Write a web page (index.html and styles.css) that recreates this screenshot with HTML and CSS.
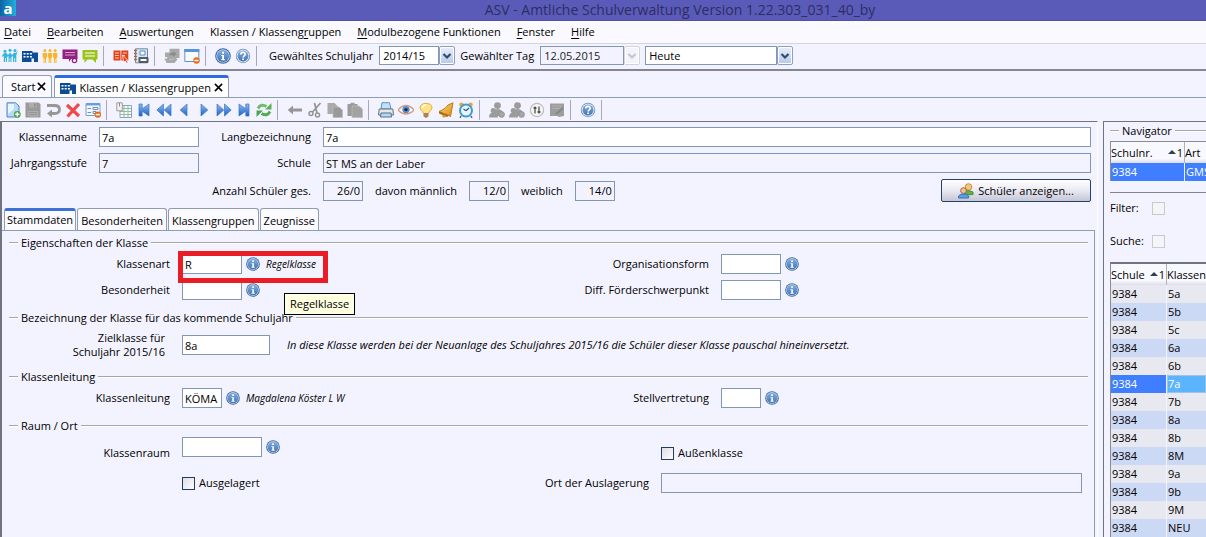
FILE: index.html
```
<!DOCTYPE html>
<html lang="de">
<head>
<meta charset="utf-8">
<title>ASV - Amtliche Schulverwaltung</title>
<link rel="stylesheet" href="styles.css">
</head>
<body>
<svg class="defs" aria-hidden="true">
  <defs>
    <linearGradient id="blue" x1="0" y1="0" x2="0" y2="1"><stop offset="0" stop-color="#8cbcf0"/><stop offset="1" stop-color="#1f5fc0"/></linearGradient>
    <linearGradient id="ball" x1="0" y1="0" x2="0" y2="1"><stop offset="0" stop-color="#86aede"/><stop offset="1" stop-color="#3f74b4"/></linearGradient>
    <linearGradient id="gold" x1="0" y1="0" x2="1" y2="1"><stop offset="0" stop-color="#ffe070"/><stop offset="1" stop-color="#d98a1a"/></linearGradient>
    <symbol id="i-info" viewBox="0 0 16 16"><circle cx="8" cy="8" r="7.8" fill="#3c66a0"/><circle cx="8" cy="8" r="6.800" fill="#b9d0ec"/><circle cx="8" cy="8" r="6" fill="url(#ball)"/><path d="M6.300 7h2.700v4.200h1v1.100H6.200v-1.100h1V8.100h-.9zM7.100 3.800h1.900v1.900H7.100z" fill="#fff"/></symbol>
    <symbol id="i-help" viewBox="0 0 16 16"><circle cx="8" cy="8" r="7.2" fill="#6d8db8"/><circle cx="8" cy="8" r="6.4" fill="#d8e4f4"/><circle cx="8" cy="8" r="5.4" fill="url(#ball)"/><path d="M5.8 6.600C5.8 3.600 10.300 3.800 10.200 6.400 10.100 7.800 8.100 7.800 8.100 9.600" fill="none" stroke="#fff" stroke-width="1.600"/><path d="M7.200 10.400h1.800v1.700H7.200z" fill="#fff"/></symbol>
    <symbol id="i-people" viewBox="0 0 16 16"><g fill="#35b4dc"><circle cx="3" cy="3.200" r="1.500"/><circle cx="8" cy="2.200" r="1.500"/><circle cx="13" cy="2.600" r="1.500"/><path d="M.3 7l2-2h2L6 7 8 4.500 10 7l2-2.200h2L15.800 3l-1.500 4v7h-1.200v-4h-.8v4H11V8L9.500 9v5H8.400v-4h-.8v4H6.500V8L5 9v5H3.900v-4h-.8v4H1.800V8L.3 9z"/></g></symbol>
    <symbol id="i-school" viewBox="0 0 16 16"><path d="M0 3h10.500v1.500H16V14h-4v-3.500H9.500V14H0z" fill="#0b4c94"/><path d="M1.500 5h2v1.600h-2zM4.700 5h2v1.600h-2zM7.900 5h2v1.600h-2zM1.500 8h2v1.600h-2zM4.700 8h2v1.600h-2zM7.900 8h2v1.600h-2z" fill="#fff"/></symbol>
    <symbol id="i-three" viewBox="0 0 16 16"><g fill="#f9b628"><circle cx="2.800" cy="2.600" r="1.500"/><circle cx="8" cy="2.600" r="1.500"/><circle cx="13.200" cy="2.600" r="1.500"/><path d="M.6 5h4.400v4.500h-.9V15H3.100v-4h-.6v4H1.500V9.500H.6zM5.800 5h4.400v4.500h-.9V15H8.300v-4h-.6v4H6.700V9.500h-.9zM11 5h4.400v4.500h-.9V15h-1v-4h-.6v4h-1V9.500H11z"/></g></symbol>
    <symbol id="i-board" viewBox="0 0 16 16"><path d="M.5 1.500h15V11H9l-2 3v-3H.5z" fill="#94207f"/><path d="M3 4.500h10M3 7h10" stroke="#d9a3d0"/><circle cx="12.500" cy="12.500" r="2.800" fill="#94207f"/><circle cx="12.500" cy="12.500" r="1.500" fill="#f3f3ff"/></symbol>
    <symbol id="i-chat" viewBox="0 0 16 16"><path d="M.5 2h15v9.500H14V15l-3.500-3.500H5.500L2.500 15v-3.500h-2z" fill="#9cc21c"/><path d="M3 5h10M3 8h10" stroke="#fff" stroke-width="1.200"/></symbol>
    <symbol id="i-book" viewBox="0 0 16 16"><path d="M.5 2.500h7v10h-7zM8.300 2.500h7v10h-7z" fill="#e2421c"/><path d="M2 5h4M2 7.500h4M2 10h4M9.800 5h4M9.800 7.500H12" stroke="#ffc8ac"/><path d="M9.500 7l5 5-1 .2 1.700 2.300-1.500.8-1.300-2.200-1.800 1z" fill="#e2421c" stroke="#fff" stroke-width=".7"/></symbol>
    <symbol id="i-save-doc" viewBox="0 0 16 16"><path d="M2.500.8h12v14h-12z" fill="#d9e5f5" stroke="#7b8796"/><path d="M1 2.500h3M1 5.500h3M1 8.500h3M1 11.500h3" stroke="#a56b42" stroke-width="1.300"/><path d="M7 3h5v4H7z" fill="#fff" stroke="#4b8fe0"/><rect x="5.500" y="9" width="10" height="6" rx="1" fill="#555b66"/><path d="M7.500 12h6" stroke="#fff" stroke-width="2"/></symbol>
    <symbol id="i-puzzle" viewBox="0 0 16 16"><path d="M5.500.8h10V10H12l1.500 1.500-3 3.500H2.500L.5 10.500H3.200V9H1V4.500h4.500z" fill="#a9a9a9"/><path d="M5 7.200q1-3 4-2.700V3l3.500 3L9 9V7.200z" fill="#8b8b8b"/><path d="M5 11.200q3 1.500 5-.7" stroke="#c4c4c4" fill="none"/></symbol>
    <symbol id="i-window" viewBox="0 0 16 16"><path d="M.8 1.500h14v12H.8z" fill="#f8fbff" stroke="#6495cf"/><path d="M.3 1h15v3H.3z" fill="#5a93da"/><circle cx="12.500" cy="12.500" r="3.200" fill="#e66d1b"/><path d="M10.500 12.500h4" stroke="#fff" stroke-width="1.500"/></symbol>
    <symbol id="i-new" viewBox="0 0 16 16"><path d="M2 .8h8.500L14 4v11H2z" fill="#b9daf7" stroke="#4c86c9"/><path d="M3 2h6v5l-6 5z" fill="#eaf5ff"/><circle cx="12.300" cy="12.300" r="3.400" fill="#4da44c"/><path d="M10.200 12.300h4.200M12.300 10.200v4.200" stroke="#fff" stroke-width="1.400"/></symbol>
    <symbol id="i-disk" viewBox="0 0 16 16"><path d="M.5.500h13L15.500 2v13.500H.5z" fill="#9a9a9a"/><path d="M4 1h7.500v4.500H4zM3 9h10v5.500H3z" fill="#aeaeae"/><path d="M9 1.500h1.500v3H9z" fill="#8b8b8b"/><path d="M4 10.500h8M4 12.500h8" stroke="#959595"/></symbol>
    <symbol id="i-undo" viewBox="0 0 16 16"><path d="M2 3.500H9.500q5 0 5 4t-5 4H6" fill="none" stroke="#979797" stroke-width="2.800"/><path d="M7 7.500V15.500l-5-4z" fill="#979797"/></symbol>
    <symbol id="i-x" viewBox="0 0 16 16"><path d="M2 3l12 11M14 2L2.500 14.500" stroke="#f04a48" stroke-width="3.200"/></symbol>
    <symbol id="i-form" viewBox="0 0 16 16"><path d="M1 1.500h14v12H1z" fill="#f5f9ff" stroke="#7ba0cb"/><path d="M1 1h14v2.500H1z" fill="#6a9edc"/><path d="M2.500 6.500H6M2.500 10.500H6M8 5.500h5v2H8zM8 9.500h3v2H8z" stroke="#6a8fbb" fill="none"/><circle cx="12.800" cy="12.600" r="3.200" fill="#e66d1b"/><path d="M10.800 12.600h4" stroke="#fff" stroke-width="1.500"/></symbol>
    <symbol id="i-list" viewBox="0 0 16 16"><path d="M4 3.500h11.500v12H4z" fill="#f8fbf8" stroke="#88a5bd"/><path d="M4 6.500h11M4 9.500h11M4 12.500h11M8 4v11M12 4v11" stroke="#92bba4"/><path d="M.8.800h5.500v8H.8z" fill="#f2f2f0" stroke="#9c9c98"/><path d="M3.500 1v3.500" stroke="#888"/></symbol>
    <symbol id="i-first" viewBox="0 0 16 16"><path d="M3 2h3.200v4.800L13 2v12L6.200 9.200V14H3z" fill="url(#blue)" stroke="#3b74c8" stroke-width=".7"/></symbol>
    <symbol id="i-rew" viewBox="0 0 16 16"><path d="M7.500 2v12L.8 8zM15 2v12L8.200 8z" fill="url(#blue)" stroke="#3b74c8" stroke-width=".7"/></symbol>
    <symbol id="i-prev" viewBox="0 0 16 16"><path d="M11 2v12L4.200 8z" fill="url(#blue)" stroke="#3b74c8" stroke-width=".7"/></symbol>
    <symbol id="i-refresh" viewBox="0 0 16 16"><path d="M2 6.500Q5 1 10.500 4.500" fill="none" stroke="#6fbb6a" stroke-width="3"/><path d="M9 7.500h6.500V1z" fill="#5cb058"/><path d="M14 9.500Q11 15 5.500 11.500" fill="none" stroke="#56aa56" stroke-width="3"/><path d="M7 8.500H.5V15z" fill="#4fa652"/></symbol>
    <symbol id="i-back" viewBox="0 0 16 16"><path d="M6 3.500v3h9v3H6v3L.8 8z" fill="#969696"/></symbol>
    <symbol id="i-cut" viewBox="0 0 16 16"><path d="M13.500 1L5.500 10M7.500 1l2.500 10" stroke="#939393" stroke-width="1.700"/><circle cx="4" cy="11.500" r="2" fill="none" stroke="#939393" stroke-width="1.500"/><circle cx="10.500" cy="13" r="2" fill="none" stroke="#939393" stroke-width="1.500"/></symbol>
    <symbol id="i-copy" viewBox="0 0 16 16"><path d="M.5 1h7l3 3v8H.5z" fill="#aaa"/><path d="M6 5h6l3.500 3v7.500H6z" fill="#999" stroke="#bdbdbd" stroke-width=".7"/></symbol>
    <symbol id="i-paste" viewBox="0 0 16 16"><path d="M.5 2h3V.800h4V2h3v12H.5z" fill="#9b9b9b"/><path d="M5 4h7l3.500 3v8.500H5z" fill="#a2a2a2" stroke="#bcbcbc" stroke-width=".7"/></symbol>
    <symbol id="i-print" viewBox="0 0 16 16"><path d="M4 .7h7.500L13 7H3z" fill="#c4e1fa" stroke="#5892cf"/><path d="M1.200 7h13.600l.7 6H.5z" fill="#e5e7eb" stroke="#666d78"/><path d="M3 11h10l.5 4h-11z" fill="#b9d8f4" stroke="#4f6f91"/></symbol>
    <symbol id="i-eye" viewBox="0 0 16 16"><path d="M0 8q8-9 16 0-8 8-16 0z" fill="#fff" stroke="#d79b78" stroke-width="1.300"/><circle cx="8" cy="7.600" r="3.700" fill="#5590d0"/><circle cx="8" cy="7.600" r="1.700" fill="#1b2b48"/></symbol>
    <symbol id="i-bulb" viewBox="0 0 16 16"><path d="M5.500 11.500C5 9 2 8.500 2 5.500 2 0 14 0 14 5.500c0 3-3 3.500-3.500 6z" fill="#ffe388" stroke="#e6ab3b"/><path d="M4.500 6q0-3 3.500-3" stroke="#fff" stroke-width="1.600" fill="none"/><path d="M5.500 11h5v3.500L8 16l-2.500-1.500z" fill="#a78556"/></symbol>
    <symbol id="i-bell" viewBox="0 0 16 16"><path d="M15 .8L12.500 14.500 10 13 1 9.500C5 8 8 6 10 3z" fill="url(#gold)" stroke="#bb7a1b"/><path d="M1 9.500l10 4-2 1.500-8-3.500z" fill="#a86813"/><circle cx="6" cy="14" r="1.600" fill="#d99328"/></symbol>
    <symbol id="i-clock" viewBox="0 0 16 16"><circle cx="3.500" cy="2.800" r="2.300" fill="#e5a83f"/><circle cx="12.500" cy="2.800" r="2.300" fill="#e5a83f"/><path d="M3 14l-1 1.800M13 14l1 1.800" stroke="#557" stroke-width="1.500"/><circle cx="8" cy="8.600" r="6" fill="#eaf6ff" stroke="#3d9bd4" stroke-width="2"/><path d="M8 8.800l3-2.800M8 8.800L5.500 7" stroke="#365b7b" stroke-width="1.300"/></symbol>
    <symbol id="i-users" viewBox="0 0 16 16"><g fill="#9c9c9c"><circle cx="8.500" cy="3.600" r="3.400"/><path d="M4 14q-1-7 4.500-7t6.500 7z"/><circle cx="4.300" cy="8.500" r="2.600"/><path d="M0 15.500q0-5 4.500-5t4.500 5z"/></g><circle cx="12.600" cy="12.500" r="2.900" fill="#a6a6a6" stroke="#8c8c8c" stroke-width=".7"/></symbol>
    <symbol id="i-tools" viewBox="0 0 16 16"><circle cx="8" cy="8" r="6.600" fill="#f6f6f6" stroke="#bbb" stroke-width="1.200"/><path d="M6 4.500v7M10 4.500v7" stroke="#444" stroke-width="1.200"/><path d="M4.500 6h3M8.500 10h3" stroke="#444" stroke-width="1.600"/></symbol>
    <symbol id="i-note" viewBox="0 0 16 16"><path d="M1 1.500h14V14l-5 1-1.500-1H1z" fill="#9d9d9d"/><path d="M3 4h10M3 6.500h10" stroke="#b1b1b1"/><path d="M7 12l7-6" stroke="#858585" stroke-width="2"/></symbol>
    <symbol id="i-pupils" viewBox="0 0 16 16"><circle cx="10.500" cy="4" r="3.300" fill="#f1c878" stroke="#c4933e"/><path d="M6 12V9q4-3 9 0v2.500z" fill="#64b346" stroke="#478d32"/><circle cx="5.500" cy="7.600" r="2.900" fill="#efc198" stroke="#a3653a"/><path d="M.6 15v-2q1-2 5-2t5 2v2z" fill="#5a9ee6" stroke="#3370bd"/></symbol>
    <symbol id="i-chev" viewBox="0 0 10 10"><path d="M1.500 3L5 6.500 8.500 3" fill="none" stroke="currentColor" stroke-width="2.200"/></symbol>
    <symbol id="i-close" viewBox="0 0 10 10"><path d="M1 1l8 8M9 1L1 9" fill="none" stroke="#000" stroke-width="1.700"/></symbol>
  </defs>
</svg>

<div class="app">
  <header class="titlebar">
    <span class="logo">a</span>
    <span class="title">ASV - Amtliche Schulverwaltung Version 1.22.303_031_40_by</span>
  </header>

  <nav class="menu">
    <button><u>D</u>atei</button>
    <button><u>B</u>earbeiten</button>
    <button><u>A</u>uswertungen</button>
    <button>Klassen / Klasseng<u>r</u>uppen</button>
    <button><u>M</u>odulbezogene Funktionen</button>
    <button><u>F</u>enster</button>
    <button><u>H</u>ilfe</button>
  </nav>

  <div class="toolbar main-tools">
    <button class="tool" aria-label="Schüler"><svg><use href="#i-people"/></svg></button>
    <button class="tool" aria-label="Klassen"><svg><use href="#i-school"/></svg></button>
    <button class="tool" aria-label="Lehrkräfte"><svg><use href="#i-three"/></svg></button>
    <button class="tool" aria-label="Unterricht"><svg><use href="#i-board"/></svg></button>
    <button class="tool" aria-label="Nachrichten"><svg><use href="#i-chat"/></svg></button>
    <i class="sep"></i>
    <button class="tool" aria-label="Berichte"><svg><use href="#i-book"/></svg></button>
    <button class="tool" aria-label="Berichtsbibliothek"><svg><use href="#i-save-doc"/></svg></button>
    <i class="sep"></i>
    <button class="tool" aria-label="Module" disabled><svg><use href="#i-puzzle"/></svg></button>
    <button class="tool" aria-label="Fenster schließen"><svg><use href="#i-window"/></svg></button>
    <i class="sep"></i>
    <button class="tool" aria-label="Info"><svg><use href="#i-info"/></svg></button>
    <button class="tool" aria-label="Hilfe"><svg><use href="#i-help"/></svg></button>
    <i class="sep"></i>
    <label class="tool-label" for="jahr">Gewähltes Schuljahr</label>
    <span class="combo combo-year"><select id="jahr"><option>2014/15</option></select><span class="drop"><svg><use href="#i-chev"/></svg></span></span>
    <label class="tool-label" for="tag">Gewählter Tag</label>
    <span class="combo combo-day"><select id="tag" disabled><option>12.05.2015</option></select><span class="drop off"><svg><use href="#i-chev"/></svg></span></span>
    <span class="combo combo-today"><select aria-label="Zeitpunkt"><option>Heute</option></select><span class="drop"><svg><use href="#i-chev"/></svg></span></span>
  </div>

  <div class="doc-tabs" role="tablist">
    <button class="doc-tab" role="tab">Start<svg class="x"><use href="#i-close"/></svg></button>
    <button class="doc-tab active" role="tab" aria-selected="true"><svg class="tab-icon"><use href="#i-school"/></svg>Klassen / Klassengruppen<svg class="x"><use href="#i-close"/></svg></button>
  </div>

  <div class="toolbar doc-tools">
    <button class="tool" aria-label="Neu"><svg><use href="#i-new"/></svg></button>
    <button class="tool" aria-label="Speichern" disabled><svg><use href="#i-disk"/></svg></button>
    <button class="tool" aria-label="Rückgängig" disabled><svg><use href="#i-undo"/></svg></button>
    <button class="tool" aria-label="Löschen"><svg><use href="#i-x"/></svg></button>
    <button class="tool" aria-label="Formular schließen"><svg><use href="#i-form"/></svg></button>
    <i class="sep"></i>
    <button class="tool" aria-label="Liste"><svg><use href="#i-list"/></svg></button>
    <button class="tool" aria-label="Erster"><svg><use href="#i-first"/></svg></button>
    <button class="tool" aria-label="Zurückspulen"><svg><use href="#i-rew"/></svg></button>
    <button class="tool" aria-label="Voriger"><svg><use href="#i-prev"/></svg></button>
    <button class="tool" aria-label="Nächster"><svg class="flip"><use href="#i-prev"/></svg></button>
    <button class="tool" aria-label="Vorspulen"><svg class="flip"><use href="#i-rew"/></svg></button>
    <button class="tool" aria-label="Letzter"><svg class="flip"><use href="#i-first"/></svg></button>
    <button class="tool" aria-label="Aktualisieren"><svg><use href="#i-refresh"/></svg></button>
    <i class="sep"></i>
    <button class="tool" aria-label="Zurück" disabled><svg><use href="#i-back"/></svg></button>
    <button class="tool" aria-label="Ausschneiden" disabled><svg><use href="#i-cut"/></svg></button>
    <button class="tool" aria-label="Kopieren" disabled><svg><use href="#i-copy"/></svg></button>
    <button class="tool" aria-label="Einfügen" disabled><svg><use href="#i-paste"/></svg></button>
    <i class="sep"></i>
    <button class="tool" aria-label="Drucken"><svg><use href="#i-print"/></svg></button>
    <button class="tool" aria-label="Vorschau"><svg><use href="#i-eye"/></svg></button>
    <button class="tool" aria-label="Hinweis"><svg><use href="#i-bulb"/></svg></button>
    <button class="tool" aria-label="Erinnerung"><svg><use href="#i-bell"/></svg></button>
    <button class="tool" aria-label="Wiedervorlage"><svg><use href="#i-clock"/></svg></button>
    <i class="sep"></i>
    <button class="tool" aria-label="Schüler zuordnen" disabled><svg><use href="#i-users"/></svg></button>
    <button class="tool" aria-label="Schüler entfernen" disabled><svg><use href="#i-users"/></svg></button>
    <button class="tool" aria-label="Einstellungen"><svg><use href="#i-tools"/></svg></button>
    <button class="tool" aria-label="Notiz" disabled><svg><use href="#i-note"/></svg></button>
    <i class="sep"></i>
    <button class="tool" aria-label="Hilfe zum Modul"><svg><use href="#i-help"/></svg></button>
    <i class="sep"></i>
  </div>

  <div class="work">
    <main class="editor">
      <div class="head">
        <label for="kname">Klassenname</label><input id="kname" value="7a">
        <label for="lang">Langbezeichnung</label><input id="lang" value="7a">
        <label for="stufe">Jahrgangsstufe</label><input id="stufe" value="7" readonly>
        <label for="schule">Schule</label><input id="schule" value="ST MS an der Laber" readonly>
      </div>
      <div class="counts">
        <label class="counts-first" for="ges">Anzahl Schüler ges.</label><input id="ges" value="26/0" readonly>
        <label for="mann">davon männlich</label><input id="mann" value="12/0" readonly>
        <label for="weib">weiblich</label><input id="weib" value="14/0" readonly>
        <button class="show"><svg><use href="#i-pupils"/></svg>Schüler anzeigen...</button>
      </div>

      <div class="tabs" role="tablist">
        <button class="tab active" role="tab" aria-selected="true">Stammdaten</button>
        <button class="tab" role="tab">Besonderheiten</button>
        <button class="tab" role="tab">Klassengruppen</button>
        <button class="tab" role="tab">Zeugnisse</button>
      </div>

      <div class="panel">
        <section>
          <h2>Eigenschaften der Klasse</h2>
          <div class="grid">
            <label for="art">Klassenart</label>
            <div class="field marked"><input class="w60" id="art" value="R"><svg class="info"><use href="#i-info"/></svg><em>Regelklasse</em><span class="tip" role="tooltip">Regelklasse</span></div>
            <label for="org">Organisationsform</label>
            <div class="field"><input class="w60" id="org"><svg class="info"><use href="#i-info"/></svg></div>
            <label for="bes">Besonderheit</label>
            <div class="field"><input class="w60" id="bes"><svg class="info"><use href="#i-info"/></svg></div>
            <label for="diff">Diff. Förderschwerpunkt</label>
            <div class="field"><input class="w60" id="diff"><svg class="info"><use href="#i-info"/></svg></div>
          </div>
        </section>
        <section>
          <h2>Bezeichnung der Klasse für das kommende Schuljahr</h2>
          <div class="grid wide">
            <label class="two-line" for="ziel">Zielklasse für<br>Schuljahr 2015/16</label>
            <div class="field"><input class="w88" id="ziel" value="8a"><em class="hint">In diese Klasse werden bei der Neuanlage des Schuljahres 2015/16 die Schüler dieser Klasse pauschal hineinversetzt.</em></div>
          </div>
        </section>
        <section>
          <h2>Klassenleitung</h2>
          <div class="grid">
            <label for="leit">Klassenleitung</label>
            <div class="field"><input class="w40" id="leit" value="KÖMA"><svg class="info"><use href="#i-info"/></svg><em>Magdalena Köster L W</em></div>
            <label for="stell">Stellvertretung</label>
            <div class="field"><input class="w40" id="stell"><svg class="info"><use href="#i-info"/></svg></div>
          </div>
        </section>
        <section>
          <h2>Raum / Ort</h2>
          <div class="grid room">
            <label class="low" for="raum">Klassenraum</label>
            <div class="field"><input class="w80" id="raum"><svg class="info"><use href="#i-info"/></svg></div>
            <span></span>
            <label class="check low"><input type="checkbox">Außenklasse</label>
            <span></span>
            <label class="check"><input type="checkbox">Ausgelagert</label>
            <label for="ort">Ort der Auslagerung</label>
            <input id="ort" readonly>
          </div>
        </section>
      </div>
    </main>

    <aside class="side">
      <h2>Navigator</h2>
      <table class="schools">
        <thead><tr><th>Schulnr. <span class="sort">1</span></th><th>Art</th></tr></thead>
        <tbody><tr class="sel"><td>9384</td><td>GMS</td></tr></tbody>
      </table>
      <div class="filters">
        <label for="filter">Filter:</label><input type="checkbox" id="filter" disabled>
        <label for="suche">Suche:</label><input type="checkbox" id="suche" disabled>
      </div>
      <table class="classes">
        <thead><tr><th>Schule <span class="sort">1</span></th><th>Klassen</th></tr></thead>
        <tbody>
          <tr><td>9384</td><td>5a</td></tr>
          <tr><td>9384</td><td>5b</td></tr>
          <tr><td>9384</td><td>5c</td></tr>
          <tr><td>9384</td><td>6a</td></tr>
          <tr><td>9384</td><td>6b</td></tr>
          <tr class="sel"><td>9384</td><td class="focus">7a</td></tr>
          <tr><td>9384</td><td>7b</td></tr>
          <tr><td>9384</td><td>8a</td></tr>
          <tr><td>9384</td><td>8b</td></tr>
          <tr><td>9384</td><td>8M</td></tr>
          <tr><td>9384</td><td>9a</td></tr>
          <tr><td>9384</td><td>9b</td></tr>
          <tr><td>9384</td><td>9M</td></tr>
          <tr><td>9384</td><td>NEU</td></tr>
        </tbody>
      </table>
    </aside>
  </div>
</div>
</body>
</html>
```

FILE: styles.css
```
*, *::before, *::after { box-sizing: border-box; }

body {
  margin: 0;
  background: #f3f3ff;
  color: #000;
  font: 11px/14px "Open Sans", "Noto Sans", sans-serif;
}

button, input, select {
  font: inherit;
  color: inherit;
  margin: 0;
}

button {
  background: none;
  border: 0;
  padding: 0;
  white-space: nowrap;
}

input, select {
  height: 20px;
  min-width: 0;
  padding: 0 2px;
  background: #fff;
  border: 1px solid #8297b3;
  border-radius: 0;
}

input:read-only { background: #f3f3ff; }

label, h2 { white-space: nowrap; }

.defs { position: absolute; width: 0; height: 0; }

.app {
  display: flex;
  flex-direction: column;
  min-height: 100vh;
  overflow: hidden;
}

/* Title and menu */
.titlebar {
  display: flex;
  height: 21px;
  background: #5a5bb9;
  border-bottom: 1px solid #504fa0;
}

.logo {
  width: 16px;
  height: 16px;
  background: linear-gradient(90deg, #0b63a5, #20b0dc);
  color: #fff;
  font: bold 15px/16px "Noto Sans", sans-serif;
  text-align: center;
}

.title {
  flex: 1;
  padding-left: 138px;
  color: #2e2d63;
  font-size: 14px;
  line-height: 19px;
  text-align: center;
}

.menu {
  display: flex;
  gap: 16px;
  height: 23px;
  padding: 0 4px;
  background: #f9f9ff;
  border-bottom: 1px solid #d4d4dc;
}

.menu u { text-underline-offset: 2px; }

/* Toolbars */
.toolbar {
  display: flex;
  align-items: center;
}

.main-tools {
  height: 27px;
  padding-bottom: 2px;
  border-bottom: 2px solid #85858f;
}

.doc-tools {
  height: 24px;
  padding-left: 3px;
  border-top: 1px solid #8f9db3;
}

.tool {
  display: grid;
  place-items: center;
  flex: none;
  width: 20px;
  height: 20px;
}

.tool svg { width: 16px; height: 16px; }
.flip { transform: scaleX(-1); }

.sep {
  flex: none;
  width: 1px;
  height: 20px;
  margin: 0 7px 0 3px;
  background: #a9a9b5;
}

.tool-label {
  margin: 0 6px 0 5px;
}

.combo { display: flex; height: 19px; }

.combo select {
  flex: 1;
  appearance: none;
  height: 19px;
  padding: 0 3px;
  opacity: 1;
}

.combo select:disabled { background: #f3f3ff; color: #222; }

.combo-year { width: 76px; }
.combo-day { width: 100px; }
.combo-today { width: 148px; margin-left: 5px; }

.drop {
  display: grid;
  place-items: center;
  width: 16px;
  border: 1px solid #8aa1c2;
  border-radius: 2px;
  background: linear-gradient(#e8effb, #b4c9ea);
  box-shadow: inset 0 0 0 1px #fff;
  color: #33496e;
}

.drop svg { width: 10px; height: 10px; }

.drop.off {
  background: #f3f3fb;
  border-color: #d3d3dc;
  color: #c6c6ce;
}

/* Document tabs */
.doc-tabs {
  display: flex;
  align-items: stretch;
  gap: 2px;
  height: 26px;
  padding: 4px 2px 0;
}

.doc-tab {
  display: flex;
  align-items: center;
  gap: 2px;
  padding: 0 5px 0 8px;
  background: #fafaff;
  border: 1px solid #8f9db3;
  border-bottom: 0;
  border-radius: 3px 3px 0 0;
}

.doc-tab.active {
  gap: 3px;
  padding: 0 5px;
  background: #fff;
  border-top: 3px solid #2f6be0;
}

.doc-tab .x { width: 9px; height: 9px; }
.tab-icon { width: 16px; height: 16px; }

/* Work area */
.work {
  display: grid;
  grid-template-columns: minmax(0, 1fr) 103px;
  gap: 5px;
  flex: 1;
}

.editor {
  display: flex;
  flex-direction: column;
  padding-top: 5px;
  border: solid #6f7480;
  border-width: 1px 0 0 2px;
  border-right: 1px solid #fff;
}

.head {
  display: grid;
  grid-template-columns: 85px 100px 100px minmax(0, 1fr);
  gap: 6px 12px;
  align-items: center;
  padding-right: 6px;
}

.head label, .grid > label { text-align: right; }

.counts {
  display: flex;
  align-items: center;
  gap: 12px;
  margin-top: 6px;
  padding-right: 6px;
}

.counts-first { width: 309px; text-align: right; }
.counts input { width: 40px; text-align: right; }

.show {
  display: flex;
  align-items: center;
  justify-content: center;
  gap: 4px;
  width: 150px;
  height: 23px;
  margin-left: auto;
  background: linear-gradient(#fff, #e9e9f3 50%, #c6c6d4);
  border: 1px solid #22416b;
  border-radius: 2px;
}

.show svg { width: 16px; height: 16px; }

.tabs {
  display: flex;
  gap: 1px;
  height: 28px;
  padding: 6px 2px 0;
}

.tab {
  padding: 2px 3px 0;
  background: #fafaff;
  border: 1px solid #8f9db3;
  border-bottom: 0;
  border-radius: 3px 3px 0 0;
}

.tab.active {
  padding: 0 2px 2px;
  border-top: 3px solid #3d70d6;
}

.panel {
  flex: 1;
  margin-right: 2px;
  padding: 4px 6px 0 7px;
  border-top: 1px solid #8f9db3;
  border-right: 1px solid #8f9db3;
}

h2 {
  display: flex;
  align-items: center;
  gap: 3px;
  height: 16px;
  margin: 0;
  font-size: 11px;
  font-weight: normal;
}

h2::before, h2::after {
  content: "";
  width: 9px;
  height: 2px;
  background: #a5a6b0;
  border-bottom: 1px solid #fff;
}

h2::after { flex: 1; }

.grid {
  display: grid;
  grid-template-columns: 161px minmax(0, 1fr) 140px 361px;
  gap: 6px 12px;
  align-items: center;
  padding: 3px 6px 10px 0;
}

.grid.wide {
  grid-template-columns: 161px minmax(0, 1fr);
  padding: 5px 0 10px;
}

.grid.room {
  grid-template-columns: 161px minmax(0, 1fr) 140px 421px;
  row-gap: 13px;
}

.grid.room .field { align-self: start; }

.two-line { padding-right: 5px; }
.grid .low { padding-top: 9px; }

.field {
  display: flex;
  align-items: center;
  gap: 4px;
}

.field em { margin-left: 2px; font-size: 10px; white-space: nowrap; }
.field .hint { margin-left: 13px; font-size: 11px; }

.info { width: 14px; height: 14px; }

.w40 { width: 40px; }
.w60 { width: 60px; }
.w80 { width: 80px; }
.w88 { width: 88px; }

.check {
  display: flex;
  align-items: center;
  gap: 4px;
}

input[type="checkbox"] {
  appearance: none;
  width: 13px;
  height: 13px;
  padding: 0;
  border: 1px solid #1f3d66;
  background: linear-gradient(135deg, #dedee4, #fff);
}

input[type="checkbox"]:disabled {
  border-color: #c9c9d1;
  background: #f5f5f8;
}

/* Highlight frame and tooltip lie over the fields */
.marked { position: relative; }

.marked::after {
  content: "";
  position: absolute;
  left: -4px;
  top: -3px;
  width: 150px;
  height: 32px;
  border: 5px solid #ea1c24;
}

.tip {
  position: absolute;
  left: 102px;
  top: 39px;
  padding: 3px 5px;
  background: #ffffe1;
  border: 1px solid #000;
}

/* Navigator */
.side {
  padding-left: 6px;
  border: solid #6f7480;
  border-width: 1px 0 0 1px;
  overflow: hidden;
}

table {
  table-layout: fixed;
  width: 100%;
  border-collapse: separate;
  border-spacing: 0;
  border-left: 1px solid #8c8c96;
}

th, td {
  height: 18px;
  padding: 0 1px;
  overflow: hidden;
  font-weight: normal;
  text-align: left;
  white-space: nowrap;
}

th {
  height: 21px;
  padding-left: 0;
  background: linear-gradient(#f8f8ff 80%, #dcdce8);
}

th:first-child { border-right: 1px solid #b0b0bc; }
td:first-child { border-right: 1px solid #f3f3ff; }

.side h2 { margin-top: 1px; }
.schools { margin-top: 2px; border-top: 1px solid #8c8c96; }
.schools th:first-child { width: 74px; }
.classes th:first-child { width: 56px; }
.classes { border-top: 2px solid #6f7480; }

tbody tr:nth-child(odd) { background: #e8e8f0; }
tbody tr:nth-child(even) { background: #ccd9f5; }
tbody tr.sel { background: #3f7fff; color: #fff; }
td.focus { background: #5cb4ff; box-shadow: inset 0 0 0 1px #9cc4e8; }

.sort { float: right; }

.sort::before {
  content: "";
  display: inline-block;
  margin-right: 1px;
  vertical-align: 3px;
  border: solid transparent;
  border-width: 0 4px 4px;
  border-bottom-color: #2e4050;
}

.filters {
  display: grid;
  grid-template-columns: 38px 13px;
  gap: 19px 4px;
  align-items: center;
  margin-top: 11px;
  padding: 8px 0 14px;
  border-top: 1px solid #85858f;
}
```
